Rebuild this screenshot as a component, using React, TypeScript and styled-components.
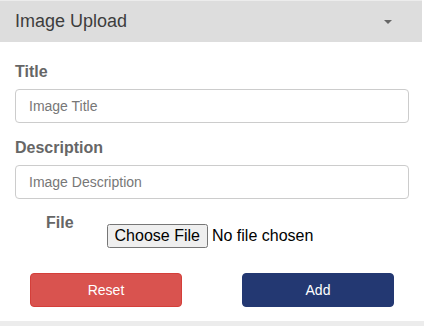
import React from "react";
import styled, { createGlobalStyle } from "styled-components";

const Global = createGlobalStyle`
  html, body { margin: 0; padding: 0; background: #ffffff; }
  body { font-family: "Liberation Sans", Arial, sans-serif; }
  * { box-sizing: border-box; }
`;

const Page = styled.div`
  width: 424px;
  height: 326px;
  display: flex;
  flex-direction: column;
  overflow: hidden;
`;

const Panel = styled.section`
  width: 422px;
  border-top: 1px solid #ececec;
  background: #fff;
`;

const Header = styled.div`
  height: 41px;
  background: #dddddd;
  display: flex;
  align-items: center;
  justify-content: space-between;
  padding: 0 30px 0 15px;
  font-size: 18px;
  color: #3d3d3d;
`;

const Caret = styled.span`
  width: 0;
  height: 0;
  border-left: 4px solid transparent;
  border-right: 4px solid transparent;
  border-top: 4px solid #666;
  margin-top: 1px;
`;

const Body = styled.div`
  padding: 21px 13px 14px 15px;
  display: flex;
  flex-direction: column;
`;

const Label = styled.label`
  display: block;
  font-size: 16px;
  font-weight: bold;
  color: #666;
  line-height: 18px;
`;

const Input = styled.input`
  display: block;
  width: 394px;
  height: 34px;
  margin: 8px 0 16px;
  padding: 6px 13px;
  border: 1px solid #cccccc;
  border-radius: 4px;
  font-family: "Liberation Sans", Arial, sans-serif;
  font-size: 14px;
  color: #555;
  &::placeholder { color: #777; }
`;

const FileRow = styled.div`
  display: flex;
  align-items: flex-start;
  padding-left: 31px;
  margin-top: -1px;
`;

const FileInput = styled.input`
  margin: 10px 0 0 33px;
  font-family: "Liberation Sans", Arial, sans-serif;
  font-size: 16px;
  color: #000;
`;

const Actions = styled.div`
  display: grid;
  grid-template-columns: 1fr 1fr;
  margin: 25px -13px 0 -15px;
  width: 424px;
`;

const Cell = styled.div`
  display: flex;
  justify-content: center;
`;

const Btn = styled.button<{ $bg: string; $border: string }>`
  width: 152px;
  height: 34px;
  border-radius: 4px;
  border: 1px solid ${(p) => p.$border};
  background: ${(p) => p.$bg};
  color: #fff;
  font-family: "Liberation Sans", Arial, sans-serif;
  font-size: 14px;
`;

const Footer = styled.div`
  margin-top: auto;
  height: 5px;
  background: #ececec;
`;

export default function App() {
  return (
    <Page>
      <Global />
      <Panel>
        <Header>
          <span>Image Upload</span>
          <Caret />
        </Header>
        <Body>
          <Label>Title</Label>
          <Input placeholder="Image Title" />
          <Label>Description</Label>
          <Input placeholder="Image Description" />
          <FileRow>
            <Label>File</Label>
            <FileInput type="file" />
          </FileRow>
          <Actions>
            <Cell>
              <Btn $bg="#d9534f" $border="#d43f3a">Reset</Btn>
            </Cell>
            <Cell>
              <Btn $bg="#233872" $border="#233872">Add</Btn>
            </Cell>
          </Actions>
        </Body>
      </Panel>
      <Footer />
    </Page>
  );
}
